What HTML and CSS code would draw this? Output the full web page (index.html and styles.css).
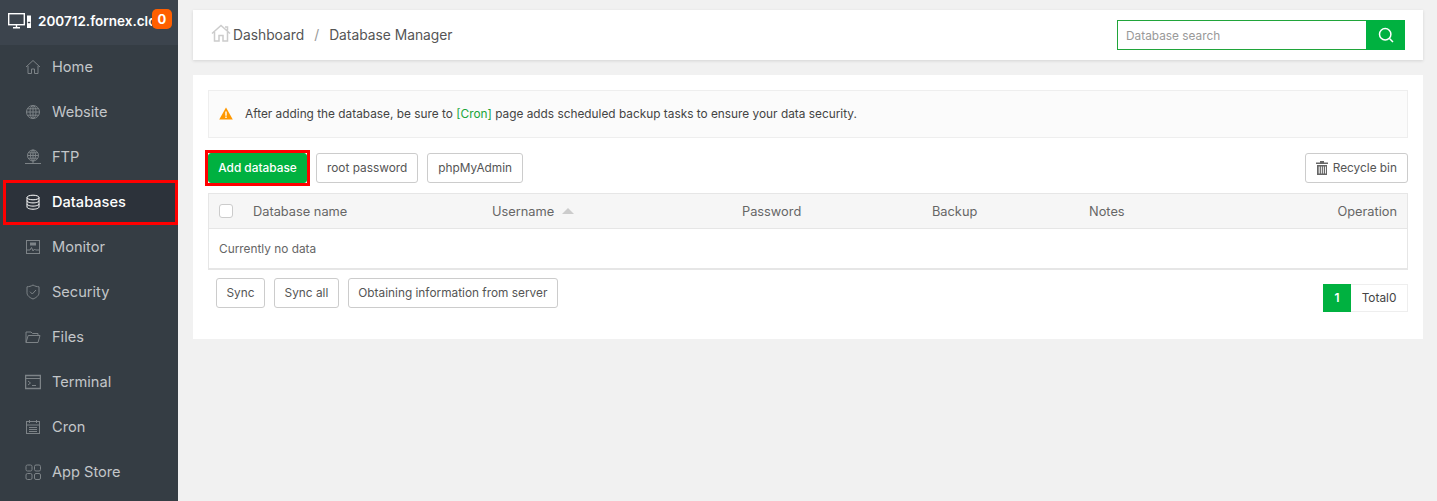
FILE: index.html
```html
<!DOCTYPE html>
<html lang="en">
<head>
<meta charset="utf-8">
<title>Database Manager</title>
<link rel="stylesheet" href="styles.css">
</head>
<body>
<div class="layout">
  <aside class="sidebar">
    <div class="server">
      <svg class="server-icon" viewBox="0 0 23 16" width="23" height="16" fill="none" stroke="#fff" stroke-width="1.400"><rect x="0.700" y="0.700" width="15.600" height="11"/><path d="M5 14.800h7M8.500 12v2.800"/><path d="M19 2.500h4V15h-4z" fill="#fff" stroke="none"/><path d="M19.800 9.500h2.400" stroke="#3c444d"/></svg>
      <span class="server-name">200712.fornex.cloud</span>
      <span class="badge">0</span>
    </div>
    <nav class="menu">
      <a class="item"><svg class="ico" viewBox="0 0 16 16"><path d="M1 8 8 1.500 15 8M3 7v7.500h3.500V10h3v4.500H13V7"/></svg>Home</a>
      <a class="item"><svg class="ico" viewBox="0 0 16 16"><circle cx="8" cy="8" r="6.500"/><ellipse cx="8" cy="8" rx="3" ry="6.500"/><path d="M1.500 8h13M2.500 4.800h11M2.500 11.200h11M8 1.500v13"/></svg>Website</a>
      <a class="item"><svg class="ico" viewBox="0 0 16 16"><circle cx="8" cy="6.500" r="5.500"/><ellipse cx="8" cy="6.500" rx="2.500" ry="5.500"/><path d="M2.500 6.500h11M3.500 3.800h9M3.500 9.200h9M8 1v13M0 14.500h16"/></svg>FTP</a>
      <a class="item active"><svg class="ico" viewBox="0 0 16 16"><ellipse cx="8" cy="3.500" rx="6" ry="2.300"/><path d="M2 3.500v9.500c0 1.200 2.700 2.200 6 2.200s6-1 6-2.200V3.500M2 6.700c0 1.200 2.700 2.200 6 2.200s6-1 6-2.200M2 9.900c0 1.200 2.700 2.200 6 2.200s6-1 6-2.200"/></svg>Databases</a>
      <a class="item"><svg class="ico" viewBox="0 0 16 16"><rect x="1.500" y="1.500" width="13" height="13"/><rect x="5" y="3.500" width="6" height="3" class="fill"/><path d="M2 11h3l1.500-2.500 1.500 3.500 1.500-2 1 1H14"/></svg>Monitor</a>
      <a class="item"><svg class="ico" viewBox="0 0 16 16"><path d="M8 1c2 1.200 4 1.700 6 1.800v6c0 3-3 5-6 6.200-3-1.200-6-3.200-6-6.200v-6C4 2.700 6 2.200 8 1z"/><path d="m5 7.700 2.300 2.300L11 6"/></svg>Security</a>
      <a class="item"><svg class="ico" viewBox="0 0 16 16"><path d="M1 13.500V3h5l1.500 1.500H13V6.500M1 13.500h12L15 6.500H3.200z"/></svg>Files</a>
      <a class="item"><svg class="ico" viewBox="0 0 16 16"><rect x="0.500" y="1.500" width="15" height="13" class="thick"/><path d="M0.500 4.500h15M3 7l2.500 2L3 11M7 11.500h4"/></svg>Terminal</a>
      <a class="item"><svg class="ico" viewBox="0 0 16 16"><rect x="1.500" y="2.500" width="13" height="12"/><path d="M1.500 6h13M4.500 1v3M11.500 1v3M4 8.500h8M4 10.500h8M4 12.500h8"/></svg>Cron</a>
      <a class="item"><svg class="ico" viewBox="0 0 16 16"><rect x="1" y="1" width="6" height="6" rx="1.500"/><rect x="9.500" y="1" width="6" height="6" rx="1.500"/><rect x="1" y="9.500" width="6" height="6" rx="1.500"/><rect x="9.500" y="9.500" width="6" height="6" rx="1.500"/></svg>App Store</a>
    </nav>
  </aside>
  <main class="main">
    <header class="topbar">
      <div class="crumbs">
        <svg class="crumb-home" viewBox="0 0 20 18"><path d="M1 9.500 10 1.500l9 8M3.500 8v9h4.500v-5.500h4V17h4.500V8M14 3h2.500v3.500"/></svg>
        <span>Dashboard</span><span class="sep">/</span><span>Database Manager</span>
      </div>
      <div class="search">
        <input class="search-input" type="text" placeholder="Database search">
        <button class="search-btn" type="button" aria-label="Search"><svg viewBox="0 0 16 16" width="16" height="16" fill="none" stroke="#fff" stroke-width="1.500"><circle cx="7.200" cy="7.200" r="5.700"/><path d="m11.500 11.500 3.500 3.500"/></svg></button>
      </div>
    </header>
    <section class="card">
      <div class="alert">
        <svg class="warn" viewBox="0 0 14 13" width="14" height="13"><path d="M7 .5 13.800 12.500H.2z" fill="#ff9800"/><path d="M6.300 4.500h1.400v4.300H6.300zM6.300 9.600h1.400v1.400H6.300z" fill="#fff"/></svg>
        <span>After adding the database, be sure to <a class="link">[Cron]</a> page adds scheduled backup tasks to ensure your data security.</span>
      </div>
      <div class="toolbar">
        <span class="highlight"><button class="btn primary" type="button">Add database</button></span>
        <button class="btn" type="button">root password</button>
        <button class="btn" type="button">phpMyAdmin</button>
        <button class="btn recycle" type="button"><svg viewBox="0 0 12 14" width="12" height="14" fill="#666"><path d="M4 0h4v1.500h4v1.500H0V1.500h4zM1 4h10v10H1zM2.700 5.500v7h1v-7zM4.900 5.500v7h.9v-7zM6.900 5.500v7h.9v-7zM9 5.500v7h.9v-7z" fill-rule="evenodd"/></svg>Recycle bin</button>
      </div>
      <div class="table">
        <div class="thead">
          <span class="check"></span>
          <span class="th c-name">Database name</span>
          <span class="th c-user">Username<i class="sort"></i></span>
          <span class="th c-pass">Password</span>
          <span class="th c-back">Backup</span>
          <span class="th c-notes">Notes</span>
          <span class="th c-op">Operation</span>
        </div>
        <div class="tbody">Currently no data</div>
      </div>
      <div class="footer">
        <div class="actions">
          <button class="btn" type="button">Sync</button>
          <button class="btn" type="button">Sync all</button>
          <button class="btn" type="button">Obtaining information from server</button>
        </div>
        <div class="pager"><span class="page">1</span><span class="total">Total0</span></div>
      </div>
    </section>
  </main>
</div>
</body>
</html>
```
FILE: styles.css
```css
* { box-sizing: border-box; }
html, body { margin: 0; height: 100%; }
body {
  background: #f1f1f1;
  font-family: Inter, "Liberation Sans", Arial, sans-serif;
  font-size: 11.850px;
  color: #666;
  overflow: hidden;
}
.layout { display: flex; height: 501px; }
.sidebar { width: 178px; flex: none; background: #353d44; }
.server {
  height: 45px;
  background: #3c444d;
  display: flex;
  align-items: center;
  padding: 0 0 3px 8px;
  position: relative;
  overflow: hidden;
  color: #fff;
  font-size: 13.500px;
  font-weight: 600;
  white-space: nowrap;
}
.server-icon { flex: none; margin-right: 7px; }
.server-name { width: 114px; overflow: hidden; }
.badge {
  position: absolute;
  left: 152px;
  top: 9px;
  width: 20px;
  height: 20px;
  border-radius: 5px;
  background: #ff5f00;
  color: #fff;
  font-size: 13px;
  font-weight: 700;
  text-align: center;
  line-height: 20px;
}
.item {
  height: 45px;
  display: flex;
  align-items: center;
  padding: 0 0 1px 25px;
  color: #c3c6c9;
  font-size: 14.600px;
}
.ico {
  width: 16px;
  height: 16px;
  margin-right: 11px;
  fill: none;
  stroke: #7d8387;
  stroke-width: 1;
  flex: none;
}
.ico .fill { fill: #7d8387; stroke: none; }
.ico .thick { stroke-width: 1.500; }
.item.active {
  margin-left: 3px;
  padding: 0 0 1px 22px;
  border: 3px solid #f00;
  background: #2c323a;
  color: #fff;
  font-weight: 500;
}
.item.active .ico { stroke: #fff; margin-left: -3px; }
.main { flex: 1; padding: 10px 14px 0 15px; }
.topbar {
  height: 50px;
  background: #fff;
  box-shadow: 0 1px 3px rgba(0,0,0,.12);
  display: flex;
  align-items: center;
  justify-content: space-between;
  padding: 0 18px 0 18px;
}
.crumbs { display: flex; align-items: center; padding-bottom: 1px; font-size: 13.800px; color: #555; }
.crumb-home { width: 20px; height: 18px; margin-right: 2px; margin-top: -4px; fill: none; stroke: #ccc; stroke-width: 1.500; }
.sep { margin: 0 10px; color: #999; }
.search { display: flex; height: 30px; }
.search-input {
  width: 249px;
  height: 30px;
  border: 1px solid #20a53a;
  border-right: 0;
  padding: 1px 8px 0;
  font: 11.850px Inter, "Liberation Sans", Arial, sans-serif;
  outline: 0;
}
.search-input::placeholder { color: #999; }
.search-btn {
  width: 39px;
  height: 30px;
  border: 0;
  padding: 0;
  background: #00b140;
  display: flex;
  align-items: center;
  justify-content: center;
}
.card { margin-top: 15px; height: 264px; background: #fff; padding: 15px; }
.alert {
  height: 48px;
  background: #fbfbfb;
  border: 1px solid #eee;
  display: flex;
  align-items: center;
  padding: 0 0 1px 10px;
  color: #444;
}
.warn { margin-right: 12px; flex: none; }
.link { color: #20a53a; }
.toolbar { display: flex; gap: 9px; margin-top: 15px; }
.btn {
  height: 30px;
  padding: 0 10px 1px;
  background: #fff;
  border: 1px solid #ccc;
  border-radius: 3px;
  color: #555;
  font: 11.850px Inter, "Liberation Sans", Arial, sans-serif;
  white-space: nowrap;
}
.highlight {
  display: flex;
  margin: -3px;
  border: 3px solid #f00;
  background: #fff;
}
.primary {
  background: #00b140;
  border-color: #00b140;
  color: #fff;
  font-weight: 500;
  width: 99px;
  padding: 0;
}
.recycle { margin-left: auto; display: flex; align-items: center; gap: 5px; }
.table { margin-top: 10px; border: 1px solid #e6e6e6; border-bottom-width: 2px; height: 77px; }
.thead {
  height: 35px;
  background: #f6f6f6;
  border-bottom: 1px solid #e6e6e6;
  display: flex;
  align-items: center;
  position: relative;
  font-size: 12.800px;
}
.check {
  width: 14px;
  height: 14px;
  margin-left: 10px;
  border: 1px solid #ccc;
  border-radius: 3px;
  background: #fff;
}
.th { position: absolute; top: 10px; color: #666; line-height: 15px; }
.c-name { left: 44px; }
.c-user { left: 283px; }
.c-pass { left: 533px; }
.c-back { left: 723px; }
.c-notes { left: 880px; }
.c-op { right: 10px; }
.sort {
  display: inline-block;
  margin-left: 8px;
  vertical-align: 2px;
  width: 0;
  height: 0;
  border: 6px solid transparent;
  border-top: 0;
  border-bottom-color: #ccc;
}
.tbody { height: 39px; line-height: 40px; padding-left: 10px; color: #666; }
.footer { display: flex; justify-content: space-between; margin-top: 8px; padding-left: 8px; }
.actions { display: flex; gap: 9px; }
.actions .btn { padding: 0 9.500px 1px; }
.pager { display: flex; margin-top: 6px; height: 28px; }
.page { width: 28px; background: #00b140; color: #fff; font-weight: 600; text-align: center; line-height: 28px; }
.total { width: 57px; border: 1px solid #eee; border-left: 0; color: #444; text-align: center; line-height: 26px; }
```
